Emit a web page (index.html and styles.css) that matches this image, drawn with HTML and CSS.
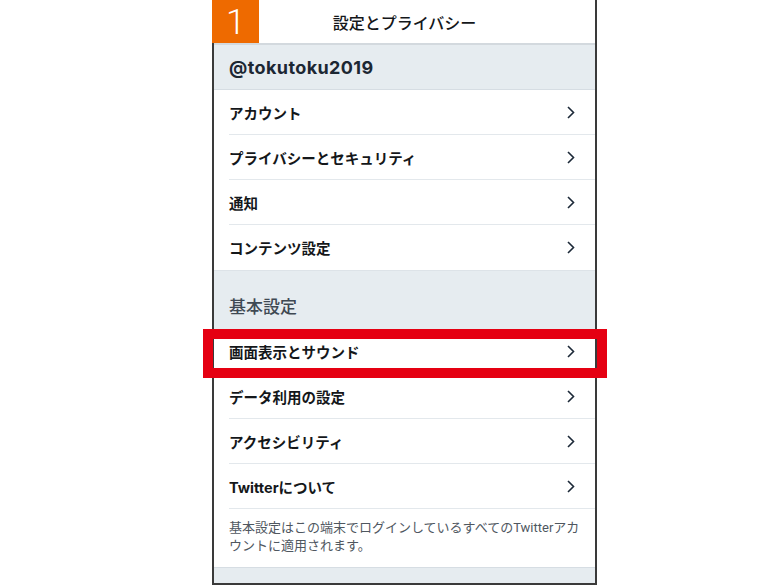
FILE: index.html
```html
<!DOCTYPE html>
<html lang="ja">
<head>
<meta charset="utf-8">
<link rel="stylesheet" href="styles.css">
</head>
<body>
<div class="frame">
  <div class="badge">1</div>
  <header class="header">設定とプライバシー</header>
  <div class="account">@tokutoku2019</div>
  <ul class="list">
    <li class="row"><span>アカウント</span><svg class="chev" viewBox="0 0 8 13"><path d="M1 1 L6.5 6.5 L1 12"/></svg></li>
    <li class="row"><span>プライバシーとセキュリティ</span><svg class="chev" viewBox="0 0 8 13"><path d="M1 1 L6.5 6.5 L1 12"/></svg></li>
    <li class="row"><span>通知</span><svg class="chev" viewBox="0 0 8 13"><path d="M1 1 L6.5 6.5 L1 12"/></svg></li>
    <li class="row last"><span>コンテンツ設定</span><svg class="chev" viewBox="0 0 8 13"><path d="M1 1 L6.5 6.5 L1 12"/></svg></li>
  </ul>
  <div class="section">基本設定</div>
  <ul class="list">
    <li class="row"><span>画面表示とサウンド</span><svg class="chev" viewBox="0 0 8 13"><path d="M1 1 L6.5 6.5 L1 12"/></svg></li>
    <li class="row"><span>データ利用の設定</span><svg class="chev" viewBox="0 0 8 13"><path d="M1 1 L6.5 6.5 L1 12"/></svg></li>
    <li class="row"><span>アクセシビリティ</span><svg class="chev" viewBox="0 0 8 13"><path d="M1 1 L6.5 6.5 L1 12"/></svg></li>
    <li class="row"><span>Twitterについて</span><svg class="chev" viewBox="0 0 8 13"><path d="M1 1 L6.5 6.5 L1 12"/></svg></li>
  </ul>
  <p class="note">基本設定はこの端末でログインしているすべてのTwitterアカウントに適用されます。</p>
  <div class="foot"></div>
  <div class="highlight"></div>
</div>
</body>
</html>
```
FILE: styles.css
```css
html, body {
  margin: 0;
  padding: 0;
  background: #ffffff;
}
body {
  font-family: "Inter", "Noto Sans CJK JP", sans-serif;
  color: #14171a;
  overflow: hidden;
  height: 585px;
}
.frame {
  position: relative;
  margin-left: 212px;
  width: 381px;
  height: 583px;
  border: 2px solid #3a3a3a;
  border-top: none;
  display: flex;
  flex-direction: column;
}
.badge {
  position: absolute;
  left: -2px;
  top: 0;
  width: 47px;
  height: 43px;
  background: #ee6a00;
  color: #ffffff;
  font-family: "Roboto", sans-serif;
  font-weight: 300;
  font-size: 35px;
  line-height: 45px;
  padding-left: 14px;
  box-sizing: border-box;
}
.header {
  height: 43px;
  border-bottom: 2px solid #d3d9de;
  display: flex;
  align-items: center;
  justify-content: center;
  font-size: 16px;
  font-weight: 500;
  color: #14171a;
}
.account {
  height: 44px;
  background: #e6ecf0;
  border-bottom: 1px solid #d6dde3;
  display: flex;
  align-items: center;
  padding-left: 15px;
  font-size: 18px;
  font-weight: 700;
  letter-spacing: 0.4px;
  color: #1c2733;
}
.list {
  list-style: none;
  margin: 0;
  padding: 0;
}
.row {
  height: 44px;
  margin-left: 15px;
  border-bottom: 1px solid #e3e8ec;
  display: flex;
  align-items: center;
  justify-content: space-between;
  padding-right: 20px;
  font-size: 14.5px;
  font-weight: 700;
  color: #14171a;
}
.row.last {
  border-bottom: none;
  height: 45px;
}
.chev {
  width: 8px;
  height: 13px;
  fill: none;
  stroke: #1c2938;
  stroke-width: 1.6;
}
.section {
  height: 59px;
  box-sizing: border-box;
  background: #e6ecf0;
  border-top: 1px solid #dde3e8;
  padding: 26px 0 0 15px;
  font-size: 17px;
  line-height: 20px;
  font-weight: 500;
  color: #3f4953;
}
.note {
  margin: 0;
  padding: 10px 15px 12px 15px;
  font-family: "Roboto", "Noto Sans CJK JP", sans-serif;
  font-size: 13px;
  line-height: 18px;
  color: #4f575f;
}
.foot {
  flex: 1;
  background: #e6ecf0;
  border-top: 1px solid #d6dde3;
}
.highlight {
  position: absolute;
  left: -11px;
  top: 329px;
  width: 404px;
  height: 49px;
  box-sizing: border-box;
  border: 10px solid #e50012;
}
```
